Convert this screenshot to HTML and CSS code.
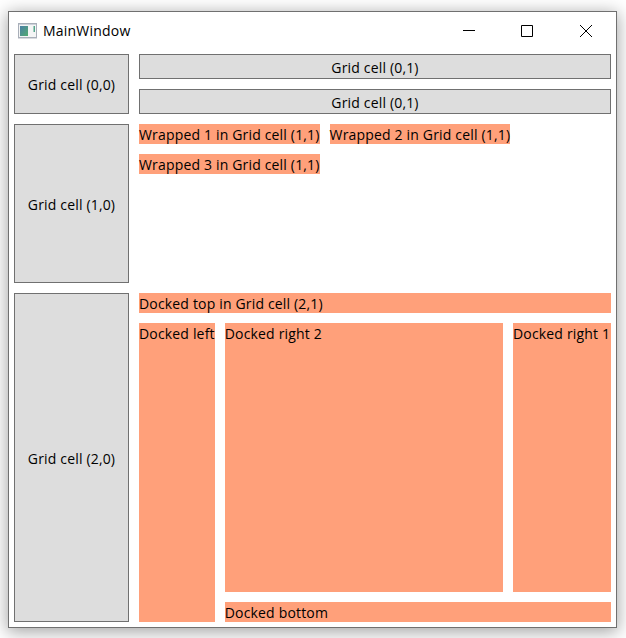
FILE: index.html
```
<!DOCTYPE html>
<html lang="en">
<head>
<meta charset="utf-8">
<title>MainWindow</title>
<link rel="stylesheet" href="styles.css">
</head>
<body>
<main class="window">
  <header class="titlebar">
    <svg class="app-icon" width="19" height="16" viewBox="0 0 19 16">
      <defs>
        <linearGradient id="pane" x1="0" y1="0" x2="1" y2="1">
          <stop offset="0" stop-color="#4a7fa6"/>
          <stop offset="1" stop-color="#52ab70"/>
        </linearGradient>
      </defs>
      <rect x=".5" y=".5" width="18" height="14" fill="#f4f5f5" stroke="#a9afb9"/>
      <path d="M1 1.5h17" stroke="#cdd2da"/>
      <path d="M0 15.5h19" stroke="#d9dbdf"/>
      <rect x="2" y="3" width="8" height="10" fill="url(#pane)"/>
      <rect x="15.5" y="3" width="1.5" height="6" fill="#53a58a"/>
    </svg>
    <h1 class="title">MainWindow</h1>
    <div class="controls">
      <svg width="14" height="14" viewBox="0 0 14 14"><path d="M1 6.5h12"/></svg>
      <svg width="14" height="14" viewBox="0 0 14 14"><path d="M1.5 1.5h11v11h-11z"/></svg>
      <svg class="close" width="14" height="14" viewBox="0 0 14 14"><path d="M1 1l12 12M13 1L1 13"/></svg>
    </div>
  </header>
  <div class="grid">
    <button class="button">Grid cell (0,0)</button>
    <div class="stack">
      <button class="button">Grid cell (0,1)</button>
      <button class="button">Grid cell (0,1)</button>
    </div>
    <button class="button">Grid cell (1,0)</button>
    <div class="wrap">
      <span class="block">Wrapped 1 in Grid cell (1,1)</span>
      <span class="block">Wrapped 2 in Grid cell (1,1)</span>
      <span class="block">Wrapped 3 in Grid cell (1,1)</span>
    </div>
    <button class="button">Grid cell (2,0)</button>
    <div class="dock">
      <div class="block top">Docked top in Grid cell (2,1)</div>
      <div class="block left">Docked left</div>
      <div class="block center">Docked right 2</div>
      <div class="block right">Docked right 1</div>
      <div class="block bottom">Docked bottom</div>
    </div>
  </div>
</main>
</body>
</html>
```
FILE: styles.css
```
* { box-sizing: border-box; }

body {
  margin: 0;
  padding: 11px 9px 10px 8px;
  height: 638px;
  overflow: hidden;
  background: #fff;
  color: #000;
  font: 14px/20px "Segoe UI", "Open Sans", "Noto Sans", sans-serif;
  letter-spacing: 0.17px;
}

.window {
  display: flex;
  flex-direction: column;
  width: 609px;
  height: 617px;
  border: 1px solid #707070;
  background: #fff;
  box-shadow: 0 3px 16px 1px rgba(0, 0, 0, 0.36);
}

.titlebar {
  display: flex;
  align-items: center;
  height: 37px;
  padding: 0 23px 0 9px;
}

.app-icon { margin-right: 6px; }

.title {
  margin: 0;
  font: inherit;
  letter-spacing: 0.22px;
}

.controls {
  display: flex;
  gap: 44px;
  margin-left: auto;
}

.controls svg {
  fill: none;
  stroke: #000;
  stroke-width: 1;
}

.controls .close { margin-left: 1px; }

.grid {
  flex: 1;
  display: grid;
  grid-template-columns: 115px 472px;
  grid-template-rows: 60px 159px 329px;
  gap: 10px;
  padding: 5px;
}

.button {
  padding: 2px 0 0;
  border: 1px solid #707070;
  border-radius: 0;
  background: #ddd;
  color: #000;
  font: inherit;
  letter-spacing: inherit;
}

.stack {
  display: grid;
  grid-template-rows: 25px 25px;
  gap: 10px;
}

.wrap {
  display: flex;
  flex-wrap: wrap;
  align-content: flex-start;
  gap: 10px;
}

.block {
  padding-top: 1px;
  background: #ffa07a;
  white-space: nowrap;
}

.wrap .block {
  width: 180.6px;
  height: 20px;
}

.dock {
  display: grid;
  grid-template-columns: 76px 278.5px 98px;
  grid-template-rows: 20px 269px 20px;
  grid-template-areas:
    "top top top"
    "left center right"
    "left bottom bottom";
  column-gap: 9.75px;
  row-gap: 10px;
}

.top { grid-area: top; }
.left { grid-area: left; }
.center { grid-area: center; }
.right { grid-area: right; }
.bottom { grid-area: bottom; }
```
